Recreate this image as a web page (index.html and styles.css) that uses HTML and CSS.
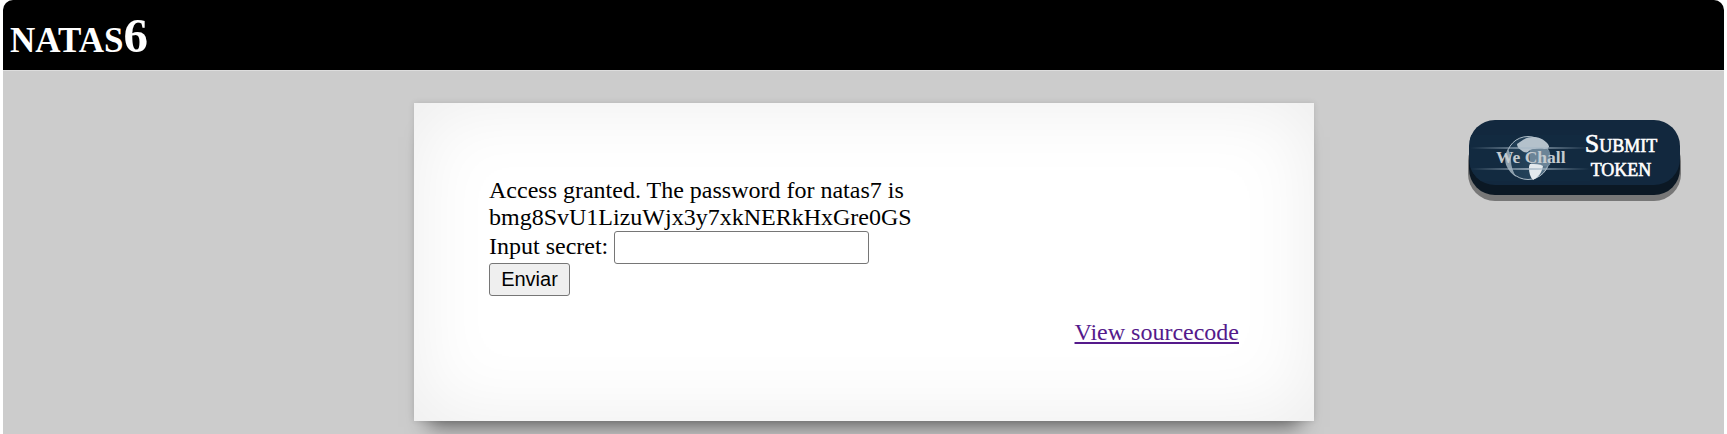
FILE: index.html
```html
<!DOCTYPE html>
<html lang="en">
<head>
<meta charset="utf-8">
<title>natas6</title>
<link rel="stylesheet" href="styles.css">
</head>
<body>
<h1 class="title"><span class="title-name">natas</span>6</h1>
<main class="page">
  <div class="content">
    <div class="message">Access granted. The password for natas7 is<br>bmg8SvU1LizuWjx3y7xkNERkHxGre0GS</div>
    <form class="secret-form">
      Input secret: <input class="secret-input" type="text"><br>
      <button class="submit" type="button">Enviar</button>
    </form>
    <div class="source"><a class="source-link" href="#">View sourcecode</a></div>
  </div>
</main>
<a class="wechall" href="#">
  <svg class="wechall-logo" width="120" height="46" viewBox="0 0 120 46" aria-hidden="true">
    <defs>
      <linearGradient id="glow">
        <stop offset="0" stop-color="#9fb2c2" stop-opacity="0"/>
        <stop offset=".5" stop-color="#a9bac8" stop-opacity=".75"/>
        <stop offset="1" stop-color="#9fb2c2" stop-opacity="0"/>
      </linearGradient>
      <linearGradient id="sea" x1="0" x2="1" y1="0" y2="0">
        <stop offset="0" stop-color="#1d3950"/>
        <stop offset=".55" stop-color="#24425a"/>
        <stop offset="1" stop-color="#6f899c"/>
      </linearGradient>
    </defs>
    <rect width="120" height="46" fill="#122a40"/>
    <circle cx="58" cy="23" r="21.5" fill="url(#sea)" stroke="#aebcc7" stroke-width="1"/>
    <path d="M47 9c5-4 10-7 16-7 4 0 9 1 13 5 3 3 4 5 2 6-4 2-7 0-10 1-4 1-8 0-10 3-2 1-5 0-7-2-2-1-4-3-4-6z" fill="#b4c1cb"/>
    <path d="M60 15c6-2 13-2 19 0 2 5 2 10 1 15-6 2-13 1-19-1-2-4-2-10-1-14z" fill="#6b8497"/>
    <path d="M60 29c5 0 10 0 13 2-1 6-4 11-10 14-3-3-4-8-4-11 0-2 0-4 1-5z" fill="#e3e9ed"/>
    <path d="M38 14c-3 4-4 12-1 18 2 4 5 7 9 10-3-6-5-11-5-16 0-4-1-8-3-12z" fill="#8ea0ae"/>
    <rect x="0" y="12" width="120" height="2" fill="url(#glow)"/>
    <rect x="0" y="33" width="120" height="2" fill="url(#glow)"/>
    <text class="wechall-word" x="26" y="28">We Chall</text>
  </svg>
  <span class="wechall-text"><span class="wechall-top">Submit</span><span class="wechall-bottom">token</span></span>
</a>
</body>
</html>
```
FILE: styles.css
```css
html, body { margin: 0; padding: 0; }
body {
  background: #fff;
  padding: 0 3px;
  height: 434px;
  overflow: hidden;
  font-family: "Liberation Serif", "Times New Roman", serif;
  font-size: 24px;
  color: #000;
}
.title {
  margin: 0;
  height: 70px;
  box-sizing: border-box;
  padding: 6px 7px 0;
  background: #000;
  color: #fff;
  border-radius: 10px 10px 0 0;
  font-size: 49px;
  line-height: 58px;
  font-weight: bold;
}
.title-name {
  font-size: 50.5px;
  font-variant: small-caps;
}
.page {
  background: #ccc;
  border-top: 1px solid #ddd;
  padding-top: 32px;
  height: 364px;
  box-sizing: border-box;
}
.content {
  width: 900px;
  height: 318px;
  box-sizing: border-box;
  margin-left: 411px;
  padding: 74px 75px 0;
  background: #fff;
  box-shadow: inset 0 0 80px rgba(0,0,0,.08), 0 0 6px rgba(0,0,0,.12), 0 20px 20px -14px rgba(0,0,0,.5);
}
.secret-input {
  box-sizing: border-box;
  width: 255px;
  height: 33px;
  padding: 0 2px;
  border: 1px solid #767676;
  border-radius: 3px;
  background: #fff;
  vertical-align: 2px;
}
.secret-form { margin: 0; }
.submit {
  box-sizing: border-box;
  width: 81px;
  height: 33px;
  margin-top: -1px;
  padding: 0;
  border: 1px solid #767676;
  border-radius: 3px;
  background: #efefef;
  font-family: "Liberation Sans", Arial, sans-serif;
  font-size: 20px;
  color: #000;
}
.source { text-align: right; margin-top: 23px; }
.source-link { color: #551a8b; }
.wechall {
  position: absolute;
  left: 1469px;
  top: 120px;
  width: 211px;
  height: 65px;
  display: flex;
  align-items: flex-start;
  padding: 15px 0 0 1px;
  box-sizing: border-box;
  background: #12283e;
  border-radius: 26px;
  overflow: hidden;
  box-shadow: 0 10px 0 #0b1824, 0 15px 0 1px #777;
  text-decoration: none;
}
.wechall-logo { flex: none; }
.wechall-word {
  font-family: "Liberation Serif", serif;
  font-size: 17.5px;
  font-weight: bold;
  fill: #c4cbd0;
}
.wechall-text {
  display: flex;
  flex-direction: column;
  align-items: center;
  color: #fff;
  font-variant: small-caps;
  -webkit-text-stroke: .6px #fff;
  margin-left: -9px;
  margin-top: -4px;
  width: 80px;
}
.wechall-top { font-size: 26px; line-height: 26px; }
.wechall-bottom { font-size: 26px; line-height: 21px; }
```
